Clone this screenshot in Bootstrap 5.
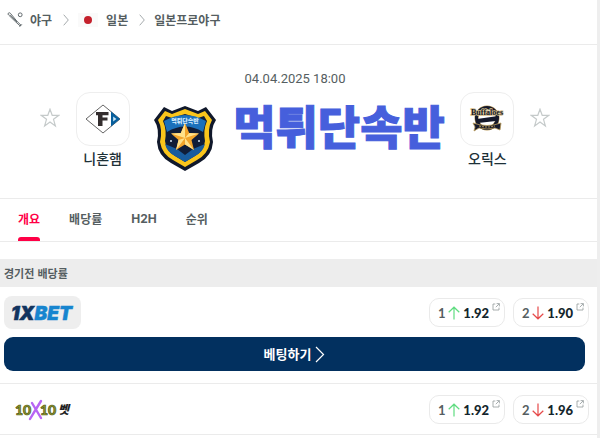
<!DOCTYPE html>
<html lang="ko">
<head>
<meta charset="utf-8">
<meta name="viewport" content="width=device-width, initial-scale=1">
<title>니혼햄 - 오릭스</title>
<link href="https://cdn.jsdelivr.net/npm/bootstrap@5.3.0/dist/css/bootstrap.min.css" rel="stylesheet">
<style>
body{font-family:"Noto Sans CJK KR",sans-serif;font-size:12px;line-height:16px;color:#555e61;background:#fff}
a,button{color:inherit;text-decoration:none}
svg{display:block;flex:none}
.page{border-right:3px solid #eee}
.rule{border-bottom:1px solid #ebebeb}
.crumbs{padding:12px 7px 16px;font-weight:700}
.crumbs .crumb-start{width:23px}
.crumbs .chev{margin:0 9px 0 11px}
.flag{width:20px;height:14px;background:#fafafa;margin-right:8px}
.flag::after{content:"";width:8px;height:8px;border-radius:50%;background:#c4202c}
.match{padding:26px 47px 26px 40px}
.date{font:13px/16px Roboto,sans-serif;color:#555e61;margin-bottom:5px}
.star{padding:0;border:0;background:none;margin-top:16px}
.club{width:54px;color:#1d3037;font-size:14px;line-height:16px;font-weight:500}
.crest{width:54px;height:54px;border:1px solid #eee;border-radius:14px;margin-bottom:4px}
.brand-title{font-size:46px;line-height:48px;font-weight:900;color:#465fdc;-webkit-text-stroke:1px #465fdc;margin:0}
.tabs{padding:0 18px;gap:29px;font-weight:700}
.tabs a{padding:12px 0 11px;border-bottom:3px solid transparent}
.tabs a.active{color:#ff0046;position:relative}
.tabs a.active::after{content:"";position:absolute;left:0;right:0;bottom:-3px;height:4px;border-radius:3px 3px 0 0;background:#ff0046}
.tabs .latin{font-family:Inter,sans-serif}
.band{margin:17px 0 0;background:#ededed;padding:6px 4px;font-size:11px;line-height:16px;font-weight:700}
.offer{padding:9px 8px 8px 4px}
.maker{width:77px;height:33px;border-radius:8px}
.maker.tint{background:#eee}
.odd{width:76px;height:29px;border:1px solid #eaeaea;border-radius:10px;padding:0 4px 0 8px;font-family:Lato,sans-serif;font-size:13px;font-weight:700}
.odd b{color:#14252c;font-weight:900}
.odd .out{margin-bottom:11px}
.bet{background:#02305f;color:#fff;border:0;border-radius:9px;height:34px;margin:0 12px 12px 4px;font-size:13px;font-weight:700}
</style>
</head>
<body>
<svg width="0" height="0" class="position-absolute" aria-hidden="true">
<defs>
<symbol id="chev" viewBox="0 0 6 12"><path d="M.7.7 5.3 6 .7 11.3" fill="none" stroke="#a5aaac"/></symbol>
<symbol id="star" viewBox="0 0 20 20"><path d="M10 1.2 12.2 7.3H18.8L13.5 11.3 15.4 17.9 10 14 4.6 17.9 6.5 11.3 1.2 7.3H7.8Z" fill="none" stroke="#c5caca" stroke-width="1.2"/></symbol>
<symbol id="up" viewBox="0 0 12 14"><path d="M6 13.5V1.2M.7 6.3 6 1.2 11.3 6.3" fill="none" stroke="#5fdc80" stroke-width="1.2"/></symbol>
<symbol id="down" viewBox="0 0 12 14"><path d="M6 .5V12.8M.7 7.7 6 12.8 11.3 7.7" fill="none" stroke="#e64a4a" stroke-width="1.2"/></symbol>
<symbol id="out" viewBox="0 0 8 8"><path d="M3.3 1H1V7H7V4.6M4.6.6H7.4V3.4M7.2.8 3.8 4.2" fill="none" stroke="#92999b" stroke-width=".8"/></symbol>
</defs>
</svg>
<div class="page">
<nav class="crumbs rule d-flex align-items-center" aria-label="경로">
  <span class="crumb-start"><svg width="16" height="16" viewBox="0 0 16 16" fill="none" stroke="#555e61" stroke-width=".9"><path d="M1.3 1.2Q2.3.2 3.4 1.3L9.8 9.1 14 13.2 13.2 14 8.8 10 1.8 3.2Q.4 2 1.3 1.2ZM3 2.8 10 10M12.5 14.7 14.9 12.3"/><circle cx="13.2" cy="2.8" r="1.9"/></svg></span>
  <a href="#">야구</a><svg class="chev" width="6" height="12"><use href="#chev"/></svg>
  <span class="flag d-flex align-items-center justify-content-center"></span><a href="#">일본</a><svg class="chev" width="6" height="12"><use href="#chev"/></svg>
  <a href="#">일본프로야구</a>
</nav>
<header class="match rule">
  <div class="date text-center">04.04.2025 18:00</div>
  <div class="d-flex justify-content-between align-items-start">
    <button class="star" aria-label="니혼햄 즐겨찾기"><svg width="20" height="20"><use href="#star"/></svg></button>
    <div class="club text-center text-nowrap">
      <div class="crest d-flex align-items-center justify-content-center">
        <svg width="36" height="30" viewBox="0 0 36 30"><path d="M18 1 35 15 18 29 1 15Z" fill="#fff" stroke="#555" stroke-width=".9"/><path d="M26 7.5 35 15 26 22.5Z" fill="#075f9d"/><path d="M28.2 12.5 31.4 15 28.2 17.5Z" fill="#cde8f7"/><path d="M11 8H23.5V11.2H17.5V13.6H22.5V16.6H17.5V22H13V11.2H11Z" fill="#332d2e"/></svg>
      </div>니혼햄
    </div>
    <div class="d-flex align-items-start gap-3 pt-2 ps-2">
      <svg class="mt-1" width="64" height="68" viewBox="0 0 64 68">
        <path d="M32 2 45 7 53 3 63 16Q57 25 60 38 59 52 46 59L32 67 18 59Q5 52 4 38 7 25 1 16L11 3 19 7Z" fill="#10182b"/>
        <path d="M32 5 45 10 52 7 59 16Q54 25 57 38 55 50 44 56L32 63 20 56Q9 50 7 38 10 25 5 16L12 7 19 10Z" fill="#fac51b"/>
        <path d="M32 10 45 14 51 12 54 17Q50 26 52 37 51 47 42 52L32 58 22 52Q13 47 12 37 14 26 10 17L13 12 19 14Z" fill="#101d38"/>
        <path d="M11 17Q32 5 53 17L50 28Q32 17 14 28Z" fill="#1b70bb"/>
        <path d="M12 40 24 45 32 51 40 45 52 40Q50 48 42 52L32 58 22 52Q14 48 12 40Z" fill="#185c9e"/>
        <path d="M32 19 36.2 29 46 29.5 38.5 36 41 46 32 40.5 23 46 25.5 36 18 29.5 27.8 29Z" fill="#f3a52b"/>
        <path d="M32 19V34L27.8 29ZM46 29.5 32 34 36.2 29ZM41 46 32 34V40.5ZM23 46 32 34 25.5 36ZM18 29.5 32 34 27.8 29Z" fill="#ffe18a"/>
        <g fill="#d5e4f3"><circle cx="18" cy="37" r="1"/><circle cx="46" cy="37" r="1"/></g>
        <text x="32" y="19" text-anchor="middle" font-size="6" font-weight="900" fill="#d7eeff">먹튀단속반</text>
      </svg>
      <h1 class="brand-title text-nowrap">먹튀단속반</h1>
    </div>
    <div class="club text-center text-nowrap">
      <div class="crest d-flex align-items-center justify-content-center">
        <svg width="36" height="30" viewBox="0 0 36 30"><circle cx="18" cy="14" r="10.5" fill="#fff" stroke="#b99a5b" stroke-width="4"/><circle cx="18" cy="14" r="10.5" fill="none" stroke="#15192b" stroke-width="3"/><path d="M8 15 29 12 27 17 9 19Z" fill="#15192b"/><text x="18" y="11" text-anchor="middle" font-family="Liberation Serif,serif" font-weight="700" font-size="8" fill="#15192b" stroke="#d8c08c" stroke-width="1.4" paint-order="stroke">Buffaloes</text><path d="M4 19Q18 24 32 19L31 26 26 24Q18 26 10 24L5 27 6 23Z" fill="#15192b" stroke="#b99a5b" stroke-width=".8"/><path d="M10 22Q18 24 26 22" fill="none" stroke="#b99a5b" stroke-dasharray="2 1"/></svg>
      </div>오릭스
    </div>
    <button class="star" aria-label="오릭스 즐겨찾기"><svg width="20" height="20"><use href="#star"/></svg></button>
  </div>
</header>
<nav class="tabs rule d-flex" aria-label="경기 메뉴">
  <a href="#" class="active">개요</a><a href="#">배당률</a><a href="#" class="latin">H2H</a><a href="#">순위</a>
</nav>
<main>
  <h2 class="band">경기전 배당률</h2>
  <section class="rule">
    <div class="offer d-flex align-items-center">
      <a href="#" class="maker tint d-flex align-items-center justify-content-center me-auto" aria-label="1XBET">
        <svg width="70" height="26" viewBox="0 0 70 26"><text x="3" y="20" font-family="Inter,sans-serif" font-weight="900" font-style="italic" font-size="19" fill="#12345f" stroke="#12345f" stroke-width=".5">1X<tspan fill="#1785cf" stroke="#1785cf">BET</tspan></text></svg>
      </a>
      <button class="odd bg-white d-flex align-items-center justify-content-between"><span>1</span><svg width="12" height="14"><use href="#up"/></svg><b>1.92</b><svg class="out" width="8" height="8"><use href="#out"/></svg></button>
      <button class="odd bg-white d-flex align-items-center justify-content-between ms-2"><span>2</span><svg width="12" height="14"><use href="#down"/></svg><b>1.90</b><svg class="out" width="8" height="8"><use href="#out"/></svg></button>
    </div>
    <div class="d-grid"><button class="bet d-flex align-items-center justify-content-center gap-1">베팅하기<svg width="10" height="17" viewBox="0 0 10 17"><path d="M1 1 8.5 8.5 1 16" fill="none" stroke="#fff" stroke-width="1.2"/></svg></button></div>
  </section>
  <section class="rule">
    <div class="offer d-flex align-items-center">
      <a href="#" class="maker d-flex align-items-center justify-content-center me-auto" aria-label="10X10벳">
        <svg width="56" height="22" viewBox="0 0 56 22"><g font-family="Lato,sans-serif" font-weight="900" font-size="14" fill="#929a2c" stroke="#4d5518" stroke-width=".7"><text x="0" y="16">10</text><text x="25" y="16">10</text></g><path d="M17 4Q20 9 26 19M26 2Q21 10 15 20" fill="none" stroke="#b765f4" stroke-width="2.4" stroke-linecap="round"/><text x="43" y="15" font-weight="900" font-size="12" font-style="italic" fill="#222">벳</text></svg>
      </a>
      <button class="odd bg-white d-flex align-items-center justify-content-between"><span>1</span><svg width="12" height="14"><use href="#up"/></svg><b>1.92</b><svg class="out" width="8" height="8"><use href="#out"/></svg></button>
      <button class="odd bg-white d-flex align-items-center justify-content-between ms-2"><span>2</span><svg width="12" height="14"><use href="#down"/></svg><b>1.96</b><svg class="out" width="8" height="8"><use href="#out"/></svg></button>
    </div>
  </section>
  <div class="pb-1"></div>
</main>
</div>
<script src="https://cdn.jsdelivr.net/npm/bootstrap@5.3.0/dist/js/bootstrap.bundle.min.js"></script>
</body>
</html>
